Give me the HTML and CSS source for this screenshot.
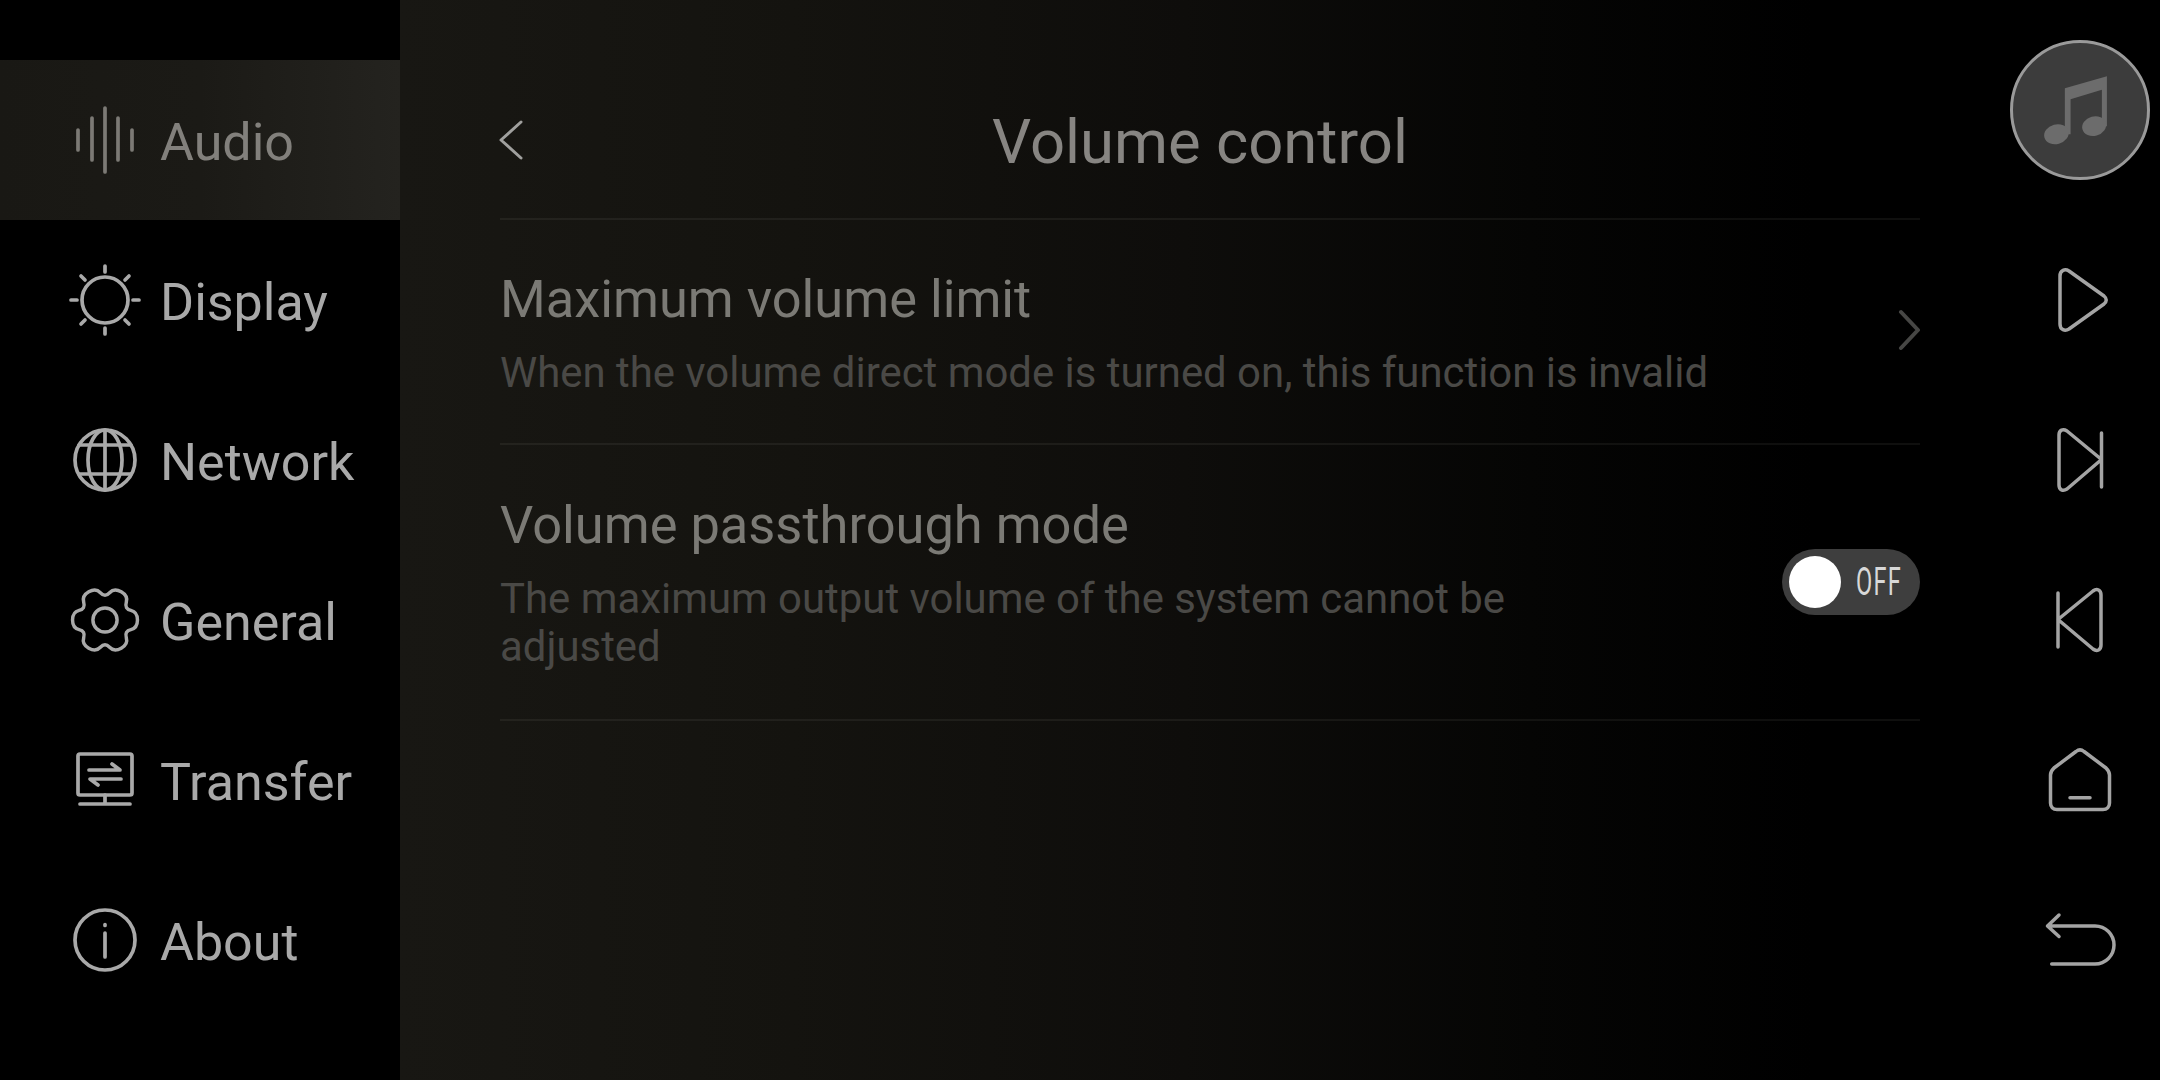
FILE: index.html
```html
<!DOCTYPE html>
<html lang="en">
<head>
	<meta name="viewport" content="width=device-width, initial-scale=1.0">
	<meta charset="utf-8">
	<title>Volume control</title>
	<link rel="stylesheet" href="styles.css">
</head>
<body>
	<div class="app">
		<!-- left menu -->
		<ul class="menu">
			<li class="current">
				<svg class="menu-icon" viewBox="0 0 80 80"><path d="M13 30V50M27 18V60M40 8V72M53 18V60M67 30V50"/></svg>
				<span>Audio</span>
			</li>
			<li>
				<svg class="menu-icon" viewBox="0 0 80 80"><circle cx="40" cy="40" r="23"/><path d="M40 6V12M40 68V74M6 40H12M68 40H74M16 16L20 20M60 60L64 64M16 64L20 60M60 20L64 16"/></svg>
				<span>Display</span>
			</li>
			<li>
				<svg class="menu-icon" viewBox="0 0 80 80"><circle cx="40" cy="40" r="30"/><ellipse cx="40" cy="40" rx="17" ry="30"/><path d="M40 10V70M14 25H66M14 54H66"/></svg>
				<span>Network</span>
			</li>
			<li>
				<svg class="menu-icon" viewBox="-43 -43 86 86"><path d="M34.9 0Q34.9 8.7 27.85 10.35Q20.8 12 22.9 18.95Q25 25.9 17.45 30.25Q9.9 34.6 4.95 29.3Q0 24 -4.95 29.3Q-9.9 34.6 -17.45 30.25Q-25 25.9 -22.9 18.95Q-20.8 12 -27.85 10.35Q-34.9 8.7 -34.9 0Q-34.9 -8.7 -27.85 -10.35Q-20.8 -12 -22.9 -18.95Q-25 -25.9 -17.45 -30.25Q-9.9 -34.6 -4.95 -29.3Q0 -24 4.95 -29.3Q9.9 -34.6 17.45 -30.25Q25 -25.9 22.9 -18.95Q20.8 -12 27.85 -10.35Q34.9 -8.7 34.9 0Z"/><circle r="13"/></svg>
				<span>General</span>
			</li>
			<li>
				<svg class="menu-icon" viewBox="0 0 80 80"><rect x="13" y="14" width="54" height="41" rx="2"/><path d="M40 55V64M15 64H65M24 30H55L47 24M56 39H25L33 45"/></svg>
				<span>Transfer</span>
			</li>
			<li>
				<svg class="menu-icon" viewBox="0 0 80 80"><circle cx="40" cy="40" r="30"/><path d="M40 33V57M40 24.5V25.5"/></svg>
				<span>About</span>
			</li>
		</ul>

		<!-- settings page -->
		<div class="page">
			<div class="page-head">
				<svg class="back" viewBox="0 0 24 44"><path d="M22 4L2 22L22 40"/></svg>
				<h1>Volume control</h1>
			</div>
			<div class="row">
				<div class="row-text">
					<h2>Maximum volume limit</h2>
					<p>When the volume direct mode is turned on, this function is invalid</p>
				</div>
				<svg class="more" viewBox="0 0 24 44"><path d="M5 4L22 22L5 40"/></svg>
			</div>
			<div class="row tall">
				<div class="row-text narrow">
					<h2>Volume passthrough mode</h2>
					<p>The maximum output volume of the system cannot be adjusted</p>
				</div>
				<div class="switch">
					<i></i>
					<span>OFF</span>
				</div>
			</div>
		</div>

		<!-- player controls -->
		<div class="rail">
			<div class="disc">
				<svg viewBox="92 62 416 416"><path d="M255 205L380 170V318H365V210L272 238V342H255Z"/><ellipse cx="230" cy="342" rx="37" ry="29" transform="rotate(-15 230 342)"/><ellipse cx="342" cy="318" rx="36" ry="29" transform="rotate(-15 342 318)"/></svg>
			</div>
			<div class="key"><svg viewBox="0 0 80 80"><path d="M20 16C20 10 25 8.5 29 11L64 36C67 38.5 67 41.5 64 44L29 69C25 71.5 20 70 20 64Z"/></svg></div>
			<div class="key"><svg viewBox="0 0 80 80"><path d="M19 15C19 10 23 8.5 27 11L61.5 39.5L27 69C23 71.5 19 70 19 65ZM61.5 13V67"/></svg></div>
			<div class="key"><svg viewBox="0 0 80 80"><path d="M18 39.5L53 11C57 8 61 10 61 15V65C61 70 57 72 53 69ZM18 13V67"/></svg></div>
			<div class="key"><svg viewBox="0 0 80 80"><path d="M36 11.5C38.5 9.5 41.5 9.5 44 11.5L66 28C68 30 69.5 32 69.5 35V63C69.5 67 67 69.5 63 69.5H17C13 69.5 10.5 67 10.5 63V35C10.5 32 12 30 14 28ZM30 57.7H50"/></svg></div>
			<div class="key"><svg viewBox="0 0 80 80"><path d="M19 15L7.5 26L19 36.5M7.5 26H55A19 19 0 0 1 55 64H11.7"/></svg></div>
		</div>
	</div>
</body>
</html>
```

FILE: styles.css
```css
html, body, ul, li, h1, h2, p{
	margin: 0;
	padding: 0;
}
ul{
	list-style: none;
}
body{
	background: #000;
	font-family: Roboto, "Liberation Sans", sans-serif;
	overflow: hidden;
}
svg{
	display: block;
	fill: none;
	stroke-linecap: round;
	stroke-linejoin: round;
}
.app{
	display: flex;
	width: 2160px;
	height: 1080px;
}

/* left menu */
.menu{
	width: 400px;
	padding-top: 60px;
	flex-shrink: 0;
}
.menu li{
	display: flex;
	align-items: center;
	height: 160px;
	padding-left: 65px;
	color: #a9a9a9;
	font-size: 52px;
}
.menu li span{
	margin: 5px 0 0 15px;
}
.menu li.current{
	color: #82807c;
	background: linear-gradient(90deg, #191814 0%, #1b1a16 50%, #24231f 100%);
}
.menu-icon{
	width: 80px;
	height: 80px;
	stroke: #a9a9a9;
	stroke-width: 3.7;
}
.current .menu-icon{
	stroke: #7c7a75;
}

/* settings page */
.page{
	flex: 1;
	padding: 60px 50px 0 100px;
	background: linear-gradient(90deg, #181713 0%, #14130f 25%, #0e0d0b 50%, #050504 72%, #000 90%);
}
.page-head{
	display: flex;
	align-items: center;
	justify-content: center;
	position: relative;
	height: 158px;
	border-bottom: 2px solid rgba(255, 255, 240, .06);
}
.back{
	position: absolute;
	left: -1px;
	top: 58px;
	width: 24px;
	height: 44px;
	stroke: #a0a09e;
	stroke-width: 3;
}
h1{
	margin: 5px 20px 0 0;
	font-size: 61.6px;
	font-weight: 400;
	color: #878582;
}
.row{
	display: flex;
	align-items: center;
	justify-content: space-between;
	padding: 47px 0 46px;
	border-bottom: 2px solid rgba(255, 255, 240, .06);
}
.row.tall{
	padding: 48px 0;
}
.row-text.narrow{
	width: 1130px;
}
h2{
	font-size: 52.4px;
	font-weight: 400;
	line-height: 64px;
	color: #7b7a75;
}
.row p{
	margin-top: 18px;
	font-size: 41.9px;
	line-height: 48px;
	color: #4a4946;
}
.more{
	width: 24px;
	height: 44px;
	margin-bottom: 4px;
	stroke: #474745;
	stroke-width: 4;
}
.switch{
	display: flex;
	align-items: center;
	flex-shrink: 0;
	width: 138px;
	height: 66px;
	padding-left: 7px;
	box-sizing: border-box;
	border-radius: 33px;
	background: #3e3e3e;
}
.switch i{
	flex-shrink: 0;
	width: 52px;
	height: 52px;
	border-radius: 50%;
	background: #fff;
}
.switch span{
	flex-shrink: 0;
	margin-left: 15px;
	font-size: 38px;
	letter-spacing: 2px;
	color: #d8d8d8;
	transform: scaleX(.62);
	transform-origin: left center;
}

/* player controls */
.rail{
	width: 190px;
	padding-top: 40px;
	flex-shrink: 0;
}
.disc{
	display: flex;
	width: 140px;
	height: 140px;
	margin: 0 0 40px 40px;
	box-sizing: border-box;
	border: 3px solid #9a9a9a;
	border-radius: 50%;
	background: #3c3c3c;
	align-items: center;
	justify-content: center;
}
.disc svg{
	width: 140px;
	height: 140px;
	flex-shrink: 0;
	fill: #6c6c6c;
}
.key{
	display: flex;
	align-items: center;
	justify-content: center;
	height: 160px;
	padding-left: 30px;
}
.key svg{
	width: 80px;
	height: 80px;
	stroke: #a4a4a4;
	stroke-width: 3.5;
}
```
